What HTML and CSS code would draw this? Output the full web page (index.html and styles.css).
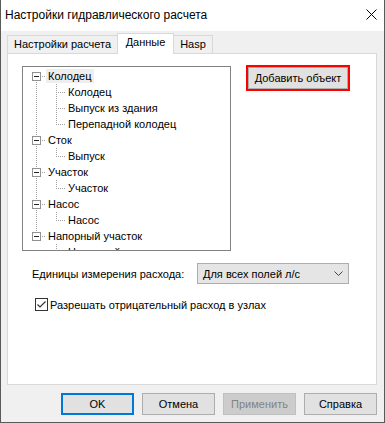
FILE: index.html
```html
<!DOCTYPE html>
<html lang="ru">
<head>
    <meta charset="UTF-8">
    <title>Настройки гидравлического расчета</title>
    <link rel="stylesheet" href="styles.css">
</head>
<body>
<div class="window">
    <div class="titlebar">
        <span class="title">Настройки гидравлического расчета</span>
        <svg class="close" width="11" height="11" viewBox="0 0 11 11">
            <path d="M0.5 0.5L10.5 10.5M10.5 0.5L0.5 10.5" stroke="#000" stroke-width="1" fill="none"/>
        </svg>
    </div>

    <div class="content">
        <div class="tabs">
            <div class="tab tab-calc">Настройки расчета</div>
            <div class="tab tab-data active">Данные</div>
            <div class="tab tab-hasp">Hasp</div>
        </div>

        <div class="panel">
            <div class="top-row">
                <div class="tree-box">
                    <ul class="tree">
                        <li>
                            <div class="row"><span class="toggle"></span><span class="hline"></span><span class="label selected">Колодец</span></div>
                            <ul class="children">
                                <li class="row"><span class="elbow"></span><span class="label">Колодец</span></li>
                                <li class="row"><span class="elbow"></span><span class="label">Выпуск из здания</span></li>
                                <li class="row last"><span class="elbow"></span><span class="label">Перепадной колодец</span></li>
                            </ul>
                        </li>
                        <li>
                            <div class="row"><span class="toggle"></span><span class="hline"></span><span class="label">Сток</span></div>
                            <ul class="children">
                                <li class="row last"><span class="elbow"></span><span class="label">Выпуск</span></li>
                            </ul>
                        </li>
                        <li>
                            <div class="row"><span class="toggle"></span><span class="hline"></span><span class="label">Участок</span></div>
                            <ul class="children">
                                <li class="row last"><span class="elbow"></span><span class="label">Участок</span></li>
                            </ul>
                        </li>
                        <li>
                            <div class="row"><span class="toggle"></span><span class="hline"></span><span class="label">Насос</span></div>
                            <ul class="children">
                                <li class="row last"><span class="elbow"></span><span class="label">Насос</span></li>
                            </ul>
                        </li>
                        <li>
                            <div class="row"><span class="toggle"></span><span class="hline"></span><span class="label">Напорный участок</span></div>
                            <ul class="children">
                                <li class="row last"><span class="elbow"></span><span class="label">Напорный участок</span></li>
                            </ul>
                        </li>
                    </ul>
                </div>

                <div class="add-frame">
                    <button class="btn add-btn">Добавить объект</button>
                </div>
            </div>

            <div class="units-row">
                <span class="units-label">Единицы измерения расхода:</span>
                <div class="select">
                    <span>Для всех полей л/с</span>
                    <svg width="9" height="5" viewBox="0 0 9 5">
                        <path d="M0.5 0.5L4.5 4.5L8.5 0.5" stroke="#444" stroke-width="1" fill="none"/>
                    </svg>
                </div>
            </div>

            <label class="check-row">
                <span class="checkbox">
                    <svg width="11" height="11" viewBox="0 0 11 11">
                        <path d="M1.5 5.5L4 8L9.5 2.5" stroke="#333" stroke-width="1.2" fill="none"/>
                    </svg>
                </span>
                <span>Разрешать отрицательный расход в узлах</span>
            </label>
        </div>

        <div class="buttons">
            <button class="btn default">OK</button>
            <button class="btn">Отмена</button>
            <button class="btn" disabled>Применить</button>
            <button class="btn">Справка</button>
        </div>
    </div>
</div>
</body>
</html>
```

FILE: styles.css
```css
* {
    box-sizing: border-box;
}
body {
    margin: 0;
    font-family: "Liberation Sans", Arial, sans-serif;
    font-size: 11px;
    color: #000;
    white-space: nowrap;
}
ul {
    list-style: none;
    margin: 0;
    padding: 0;
}
.window {
    width: 385px;
    height: 423px;
    border: 1px solid #5a5a5a;
    border-top: none;
    background: #f0f0f0;
}
.titlebar {
    height: 31px;
    background: #fff;
    display: flex;
    align-items: center;
    justify-content: space-between;
    padding: 0 7px 2px 4px;
}
.title {
    font-size: 12px;
}
.content {
    padding: 2px 7px 0 6px;
}

/* tabs */
.tabs {
    display: flex;
    align-items: flex-end;
    height: 20px;
}
.tab {
    height: 18px;
    margin-right: -1px;
    border: 1px solid #d9d9d9;
    border-bottom: none;
    background: #f0f0f0;
    text-align: center;
    line-height: 17px;
}
.tab.active {
    position: relative;
    z-index: 1;
    height: 21px;
    margin-bottom: -1px;
    background: #fff;
    line-height: 17px;
}
.tab-calc { width: 111px; }
.tab-data { width: 57px; }
.tab-hasp { width: 40px; }

.panel {
    height: 332px;
    border: 1px solid #d9d9d9;
    background: #fff;
}
.top-row {
    display: flex;
    align-items: flex-start;
    padding: 12px 0 0 14px;
}

/* tree */
.tree-box {
    width: 209px;
    height: 185px;
    border: 1px solid #828282;
    padding-top: 1px;
    overflow: hidden;
    background-color: #fff;
    background-image: repeating-linear-gradient(to bottom, #a0a0a0 0 1px, transparent 1px 2px);
    background-size: 1px 160px;
    background-position: 13px 9px;
    background-repeat: no-repeat;
}
.row {
    display: flex;
    align-items: center;
    height: 16px;
}
.toggle {
    width: 9px;
    height: 9px;
    margin-left: 9px;
    border: 1px solid #919191;
    background: linear-gradient(#222, #222) center / 5px 1px no-repeat, #fff;
}
.hline {
    width: 4px;
    height: 1px;
    margin-left: 1px;
    background: repeating-linear-gradient(to right, #a0a0a0 0 1px, transparent 1px 2px);
}
.elbow {
    width: 10px;
    height: 16px;
    margin-left: 33px;
    background:
        repeating-linear-gradient(to bottom, #a0a0a0 0 1px, transparent 1px 2px) 0 0 / 1px 100% no-repeat,
        repeating-linear-gradient(to right, #a0a0a0 0 1px, transparent 1px 2px) 0 8px / 10px 1px no-repeat;
}
.last .elbow {
    background:
        repeating-linear-gradient(to bottom, #a0a0a0 0 1px, transparent 1px 2px) 0 0 / 1px 9px no-repeat,
        repeating-linear-gradient(to right, #a0a0a0 0 1px, transparent 1px 2px) 0 8px / 10px 1px no-repeat;
}
.label {
    padding: 0 2px;
    line-height: 14px;
}
.label.selected {
    background: #eeeeee;
}

/* buttons */
.btn {
    width: 73px;
    height: 22px;
    padding: 0;
    border: 1px solid #adadad;
    background: #e1e1e1;
    font-family: inherit;
    font-size: 11px;
    color: #000;
}
.btn.default {
    border: 2px solid #0078d7;
}
.btn:disabled {
    border-color: #bfbfbf;
    background: #cccccc;
    color: #838383;
}
.add-frame {
    margin: -1px 0 0 15px;
    border: 2px solid #ff0000;
}
.add-btn {
    display: block;
    width: 100px;
}

/* units */
.units-row {
    display: flex;
    align-items: center;
    margin-top: 12px;
    padding-left: 24px;
}
.units-label {
    width: 165px;
}
.select {
    display: flex;
    align-items: center;
    justify-content: space-between;
    width: 152px;
    height: 21px;
    padding: 0 5px 0 5px;
    border: 1px solid #adadad;
    background: #e5e5e5;
}

.check-row {
    display: flex;
    align-items: center;
    margin-top: 14px;
    padding-left: 27px;
}
.checkbox {
    display: flex;
    align-items: center;
    justify-content: center;
    width: 13px;
    height: 13px;
    margin-right: 2px;
    border: 1px solid #333;
    background: #fff;
}

.buttons {
    display: flex;
    justify-content: flex-end;
    gap: 8px;
    padding-top: 8px;
}
```
